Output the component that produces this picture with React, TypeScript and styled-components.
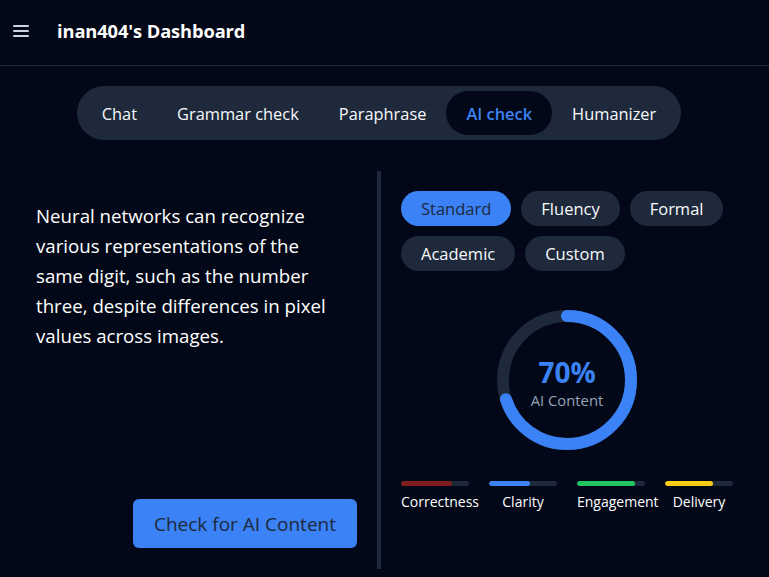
import React from "react";
import styled, { createGlobalStyle } from "styled-components";

const Global = createGlobalStyle`
  * { box-sizing: border-box; }
  html, body { margin: 0; padding: 0; background: #020817; }
  body { font-family: "Open Sans", "Noto Sans", sans-serif; color: #f8fafc; }
`;

const Page = styled.div`
  width: 769px;
  height: 577px;
  background: #020817;
  display: flex;
  flex-direction: column;
  overflow: hidden;
`;

const Header = styled.header`
  height: 66px;
  border-bottom: 1px solid #1e293b;
  display: flex;
  align-items: center;
  padding: 0 13px;
  gap: 28px;
  flex-shrink: 0;
`;

const MenuButton = styled.div`
  width: 16px;
  display: flex;
  flex-direction: column;
  gap: 3px;
  margin-top: -3px;
  span {
    display: block;
    height: 2px;
    background: #cbd5e1;
    border-radius: 1px;
  }
`;

const Title = styled.h1`
  margin: -4px 0 0;
  font-size: 18.3px;
  font-weight: 700;
  color: #ffffff;
  letter-spacing: -0.1px;
`;

const TabWrap = styled.div`
  display: flex;
  justify-content: center;
  padding: 20px 11px 0 0;
  flex-shrink: 0;
`;

const TabBar = styled.nav`
  display: flex;
  padding: 5px;
  background: #1e293b;
  border-radius: 9999px;
`;

const Tab = styled.div<{ $active?: boolean }>`
  height: 44px;
  padding: 1px 20px 0;
  display: flex;
  align-items: center;
  border-radius: 9999px;
  font-size: 16.4px;
  color: ${(p) => (p.$active ? "#3b82f6" : "#f8fafc")};
  background: ${(p) => (p.$active ? "#020817" : "transparent")};
  font-weight: ${(p) => (p.$active ? 600 : 400)};
`;

const Main = styled.main`
  display: flex;
  margin: 31px 36px 0;
  height: 398px;
`;

const LeftCol = styled.section`
  width: 341px;
  padding: 30px 20px 21px 0;
  display: flex;
  flex-direction: column;
  justify-content: space-between;
`;

const Passage = styled.p`
  margin: 0;
  max-width: 300px;
  font-size: 18.7px;
  line-height: 30px;
  color: #ffffff;
`;

const PrimaryButton = styled.button`
  align-self: flex-end;
  width: 224px;
  height: 49px;
  border: none;
  border-radius: 6px;
  background: #3b82f6;
  color: #1e293b;
  font-family: "Open Sans", sans-serif;
  font-size: 19px;
  padding: 0;
`;

const RightCol = styled.section`
  flex: 1;
  border-left: 4px solid #1e293b;
  padding: 20px 0 0 20px;
  display: flex;
  flex-direction: column;
`;

const Chips = styled.div`
  display: flex;
  flex-wrap: wrap;
  gap: 10px;
  width: 332px;
`;

const Chip = styled.div<{ $active?: boolean }>`
  height: 35px;
  padding: 0 20px;
  display: flex;
  align-items: center;
  border-radius: 9999px;
  font-size: 16.5px;
  background: ${(p) => (p.$active ? "#3b82f6" : "#1e293b")};
  color: ${(p) => (p.$active ? "#1e293b" : "#f8fafc")};
`;

const DonutWrap = styled.div`
  position: relative;
  width: 140px;
  height: 140px;
  margin: 39px 0 0 96px;
`;

const DonutCenter = styled.div`
  position: absolute;
  inset: 0;
  display: flex;
  flex-direction: column;
  align-items: center;
  justify-content: center;
  padding-top: 7px;
`;

const Percent = styled.div`
  font-size: 28px;
  font-weight: 700;
  color: #3b82f6;
  line-height: 32px;
`;

const DonutLabel = styled.div`
  font-size: 14.8px;
  color: #94a3b8;
  line-height: 24px;
`;

const Metrics = styled.div`
  display: flex;
  gap: 20px;
  margin-top: 31px;
`;

const Metric = styled.div`
  width: 68px;
  text-align: center;
  white-space: nowrap;
`;

const Track = styled.div`
  height: 5px;
  border-radius: 9999px;
  background: #1e293b;
  overflow: hidden;
`;

const Fill = styled.div<{ $color: string }>`
  height: 100%;
  border-radius: 9999px;
  background: ${(p) => p.$color};
`;

const MetricLabel = styled.div`
  margin-top: 6px;
  font-size: 14px;
  line-height: 20px;
  color: #ffffff;
`;

const tabs = ["Chat", "Grammar check", "Paraphrase", "AI check", "Humanizer"];
const modes = ["Standard", "Fluency", "Formal", "Academic", "Custom"];
const metrics = [
  { label: "Correctness", color: "#7f1d1d", value: 75 },
  { label: "Clarity", color: "#3b82f6", value: 60 },
  { label: "Engagement", color: "#22c55e", value: 85 },
  { label: "Delivery", color: "#facc15", value: 70 },
];

const R = 64;
const C = 2 * Math.PI * R;

export default function App() {
  return (
    <>
      <Global />
      <Page>
        <Header>
          <MenuButton>
            <span />
            <span />
            <span />
          </MenuButton>
          <Title>inan404's Dashboard</Title>
        </Header>
        <TabWrap>
          <TabBar>
            {tabs.map((t) => (
              <Tab key={t} $active={t === "AI check"}>
                {t}
              </Tab>
            ))}
          </TabBar>
        </TabWrap>
        <Main>
          <LeftCol>
            <Passage>
              Neural networks can recognize various representations of the same digit, such as the
              number three, despite differences in pixel values across images.
            </Passage>
            <PrimaryButton>Check for AI Content</PrimaryButton>
          </LeftCol>
          <RightCol>
            <Chips>
              {modes.map((m) => (
                <Chip key={m} $active={m === "Standard"}>
                  {m}
                </Chip>
              ))}
            </Chips>
            <DonutWrap>
              <svg width="140" height="140" viewBox="0 0 140 140">
                <circle cx="70" cy="70" r={R} fill="none" stroke="#1e293b" strokeWidth="12" />
                <circle
                  cx="70"
                  cy="70"
                  r={R}
                  fill="none"
                  stroke="#3b82f6"
                  strokeWidth="12"
                  strokeLinecap="round"
                  strokeDasharray={`${C * 0.7} ${C}`}
                  transform="rotate(-90 70 70)"
                />
              </svg>
              <DonutCenter>
                <Percent>70%</Percent>
                <DonutLabel>AI Content</DonutLabel>
              </DonutCenter>
            </DonutWrap>
            <Metrics>
              {metrics.map((m) => (
                <Metric key={m.label}>
                  <Track>
                    <Fill $color={m.color} style={{ width: `${m.value}%` }} />
                  </Track>
                  <MetricLabel>{m.label}</MetricLabel>
                </Metric>
              ))}
            </Metrics>
          </RightCol>
        </Main>
      </Page>
    </>
  );
}
